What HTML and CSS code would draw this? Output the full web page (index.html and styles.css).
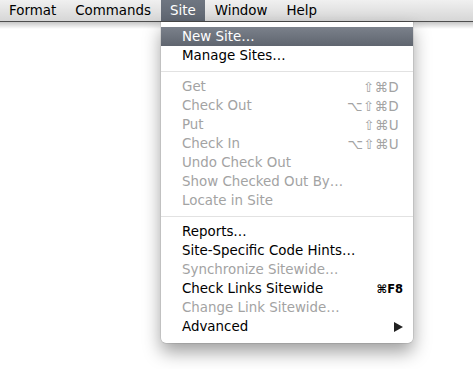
FILE: index.html
```html
<!DOCTYPE html>
<html>
<head>
<meta charset="utf-8">
<link rel="stylesheet" href="styles.css">
</head>
<body>
<div class="menubar">
  <span class="mb-item">Format</span>
  <span class="mb-item">Commands</span>
  <span class="mb-item active">Site</span>
  <span class="mb-item">Window</span>
  <span class="mb-item">Help</span>
</div>
<div class="bar-shadow"></div>
<div class="menu">
  <div class="row hl"><span>New Site…</span></div>
  <div class="row"><span>Manage Sites…</span></div>
  <div class="sep"></div>
  <div class="row dis"><span>Get</span><span class="sc">⇧⌘D</span></div>
  <div class="row dis"><span>Check Out</span><span class="sc">⌥⇧⌘D</span></div>
  <div class="row dis"><span>Put</span><span class="sc">⇧⌘U</span></div>
  <div class="row dis"><span>Check In</span><span class="sc">⌥⇧⌘U</span></div>
  <div class="row dis"><span>Undo Check Out</span></div>
  <div class="row dis"><span>Show Checked Out By…</span></div>
  <div class="row dis"><span>Locate in Site</span></div>
  <div class="sep"></div>
  <div class="row"><span>Reports…</span></div>
  <div class="row"><span>Site-Specific Code Hints…</span></div>
  <div class="row dis"><span>Synchronize Sitewide…</span></div>
  <div class="row"><span>Check Links Sitewide</span><span class="sc sc-strong">⌘F8</span></div>
  <div class="row dis"><span>Change Link Sitewide…</span></div>
  <div class="row"><span>Advanced</span><svg class="arrow" width="9" height="10" viewBox="0 0 9 10"><path d="M0 0 L9 5 L0 10 Z" fill="#222"/></svg></div>
</div>
</body>
</html>
```
FILE: styles.css
```css
html, body {
  margin: 0;
  padding: 0;
  background: #fff;
  width: 473px;
  height: 369px;
  overflow: hidden;
  font-family: "DejaVu Sans", "Liberation Sans", sans-serif;
  font-size: 13.4px;
  color: #000;
}
.menubar {
  height: 21px;
  border-bottom: 1px solid #4e4e4e;
  background: linear-gradient(#f0f0f0, #d6d6d6);
  display: flex;
  align-items: stretch;
}
.mb-item {
  display: flex;
  align-items: center;
  padding: 1px 9.5px 0;
  line-height: 20px;
}
.mb-item:first-child {
  padding-left: 9px;
}
.mb-item.active {
  background: linear-gradient(#6f7681, #5f6671);
  color: #fff;
}
.bar-shadow {
  height: 7px;
  background: linear-gradient(rgba(0,0,0,0.22), rgba(0,0,0,0));
}
.menu {
  position: absolute;
  left: 161px;
  top: 22px;
  width: 252px;
  box-sizing: border-box;
  padding: 5px 0 7px;
  background: #fff;
  border-radius: 0 0 5px 5px;
  box-shadow: 0 9px 18px rgba(0,0,0,0.38), 0 0 0 0.5px rgba(0,0,0,0.15);
}
.row {
  height: 19px;
  display: flex;
  align-items: center;
  justify-content: space-between;
  padding: 0 14px 0 21px;
  white-space: nowrap;
}
.row.hl {
  background: linear-gradient(#7b818b, #5f656f);
  color: #fff;
}
.row.dis {
  color: #a3a3a3;
}
.sc {
  font-size: 13.5px;
  letter-spacing: 0.3px;
}
.sc-strong {
  color: #000;
  font-weight: bold;
  font-size: 11.5px;
  letter-spacing: 0;
  margin-right: -4px;
}
.arrow {
  margin-right: -4px;
}
.sep {
  height: 12px;
  display: flex;
  align-items: center;
}
.sep::before {
  content: "";
  display: block;
  width: 100%;
  height: 1px;
  background: #e2e2e2;
}
```
